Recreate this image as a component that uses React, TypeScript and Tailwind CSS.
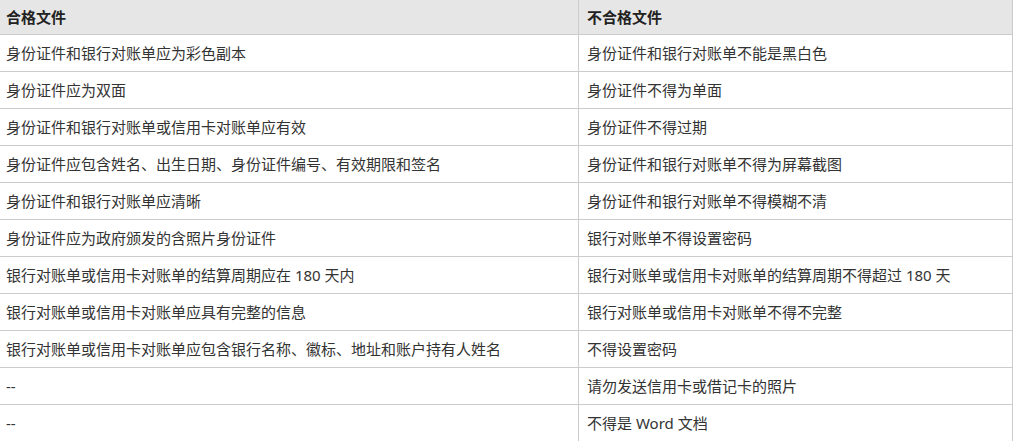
const rows: [string, string][] = [
  ['身份证件和银行对账单应为彩色副本', '身份证件和银行对账单不能是黑白色'],
  ['身份证件应为双面', '身份证件不得为单面'],
  ['身份证件和银行对账单或信用卡对账单应有效', '身份证件不得过期'],
  ['身份证件应包含姓名、出生日期、身份证件编号、有效期限和签名', '身份证件和银行对账单不得为屏幕截图'],
  ['身份证件和银行对账单应清晰', '身份证件和银行对账单不得模糊不清'],
  ['身份证件应为政府颁发的含照片身份证件', '银行对账单不得设置密码'],
  ['银行对账单或信用卡对账单的结算周期应在 180 天内', '银行对账单或信用卡对账单的结算周期不得超过 180 天'],
  ['银行对账单或信用卡对账单应具有完整的信息', '银行对账单或信用卡对账单不得不完整'],
  ['银行对账单或信用卡对账单应包含银行名称、徽标、地址和账户持有人姓名', '不得设置密码'],
  ['--', '请勿发送信用卡或借记卡的照片'],
  ['--', '不得是 Word 文档'],
];

const App = () => {
  return (
    <div className="w-[1013px] bg-white text-[15px] text-[#333] font-['Noto_Sans','Noto_Sans_CJK_SC',sans-serif]">
      <div className="grid grid-cols-[579px_434px] h-[35px] bg-[#e6e6e6] border-b border-[#cccccc] font-bold text-[#222]">
        <div className="flex items-center pl-[6px] border-r border-[#cccccc]">合格文件</div>
        <div className="flex items-center pl-[8px] border-r border-[#cccccc]">不合格文件</div>
      </div>
      {rows.map(([ok, bad], i) => (
        <div key={i} className="grid grid-cols-[579px_434px] h-[37px] border-b border-[#cccccc]">
          <div className="flex items-center pl-[6px] border-r border-[#cccccc] whitespace-nowrap">{ok}</div>
          <div className="flex items-center pl-[8px] border-r border-[#cccccc] whitespace-nowrap">{bad}</div>
        </div>
      ))}
    </div>
  );
};

export default App;
